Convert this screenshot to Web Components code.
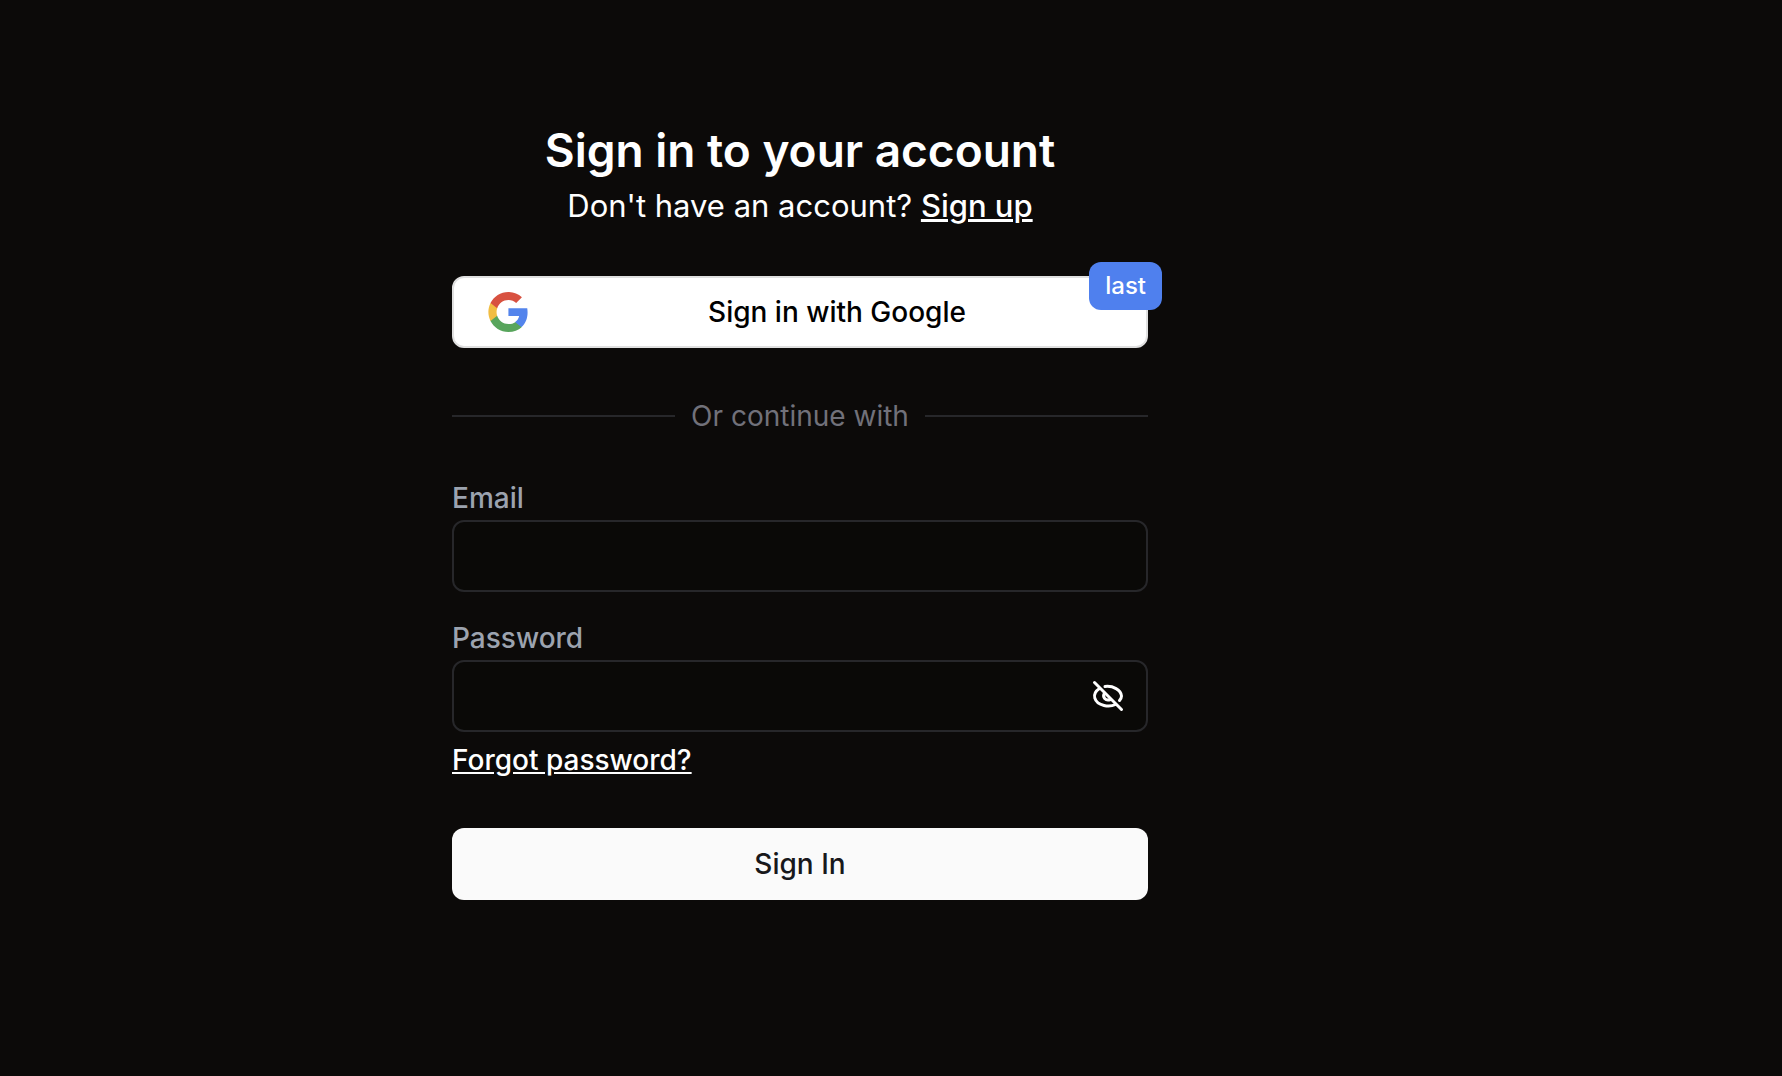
<!DOCTYPE html>
<html lang="en">
<head>
<meta charset="utf-8">
<meta name="viewport" content="width=device-width, initial-scale=1">
<title>Sign in</title>
<style>
  body {
    margin: 0;
    min-height: 100vh;
    background: #0c0a09;
    color: #fff;
    font: 400 28px/40px Inter, "Liberation Sans", sans-serif;
  }
</style>
</head>
<body>
<sign-in-page></sign-in-page>

<script>
const define = (name, html, setup) => {
  customElements.define(name, class extends HTMLElement {
    connectedCallback() {
      if (this.shadowRoot) return;
      const root = this.attachShadow({ mode: "open" });
      root.innerHTML = html;
      if (setup) setup(this, root);
    }
  });
};

define("google-logo", `
  <style>:host { display: block; width: 40px; height: 40px; } svg { display: block; width: 100%; height: 100%; }</style>
  <svg viewBox="0 0 48 48" aria-hidden="true">
    <path fill="#5384ec" d="M47.500 24.500c0-1.600-.2-3.200-.4-4.900H24.500v9.300h12.900c-.6 3-2.300 5.500-4.800 7.200v6h7.700c4.500-4.200 7.200-10.300 7.200-17.600z"/>
    <path fill="#58a55c" d="M24.500 48c6.500 0 11.900-2.100 15.900-5.800l-7.700-6c-2.100 1.400-4.900 2.300-8.200 2.300-6.300 0-11.600-4.200-13.500-9.900H3v6.200C7 42.700 15.100 48 24.500 48z"/>
    <path fill="#f1bd42" d="M11 28.600c-1-3-1-6.200 0-9.200v-6.200H3c-3.400 6.800-3.400 14.800 0 21.600z"/>
    <path fill="#d85140" d="M24.500 9.500c3.400-.1 6.800 1.200 9.300 3.600l6.900-6.900C36.300 2.100 30.500-.1 24.500 0 15.100 0 7 5.300 3 13.200l8 6.200c1.900-5.700 7.200-9.900 13.500-9.900z"/>
  </svg>`);

define("eye-off-icon", `
  <style>:host { display: block; width: 36px; height: 36px; } svg { display: block; width: 100%; height: 100%; }</style>
  <svg viewBox="0 0 36 36" fill="none" stroke="#fff" stroke-width="3" stroke-linecap="round" aria-hidden="true">
    <path d="M4.500 4.500 31.500 31.500"/>
    <path d="M15 8.500C23 7.500 31 12 31.500 18c0 1.500-.8 3-2 4.500"/>
    <path d="M9.500 10.500C1 16 4 25 14 27.500c4 1 8 .7 11.500-1"/>
    <path d="M14.500 15c-2.500 4 1 8.500 6 6.500"/>
  </svg>`);

define("page-heading", `
  <style>
    :host { display: block; text-align: center; }
    h1 { margin: 0; font-size: 46px; line-height: 48px; font-weight: 600; }
    p { margin: 8px 0 0; font-size: 31px; line-height: 48px; }
    ::slotted(a) { color: inherit; font-weight: 500; }
  </style>
  <h1><slot name="title"></slot></h1>
  <p><slot></slot></p>`);

define("provider-button", `
  <style>
    :host { display: block; position: relative; }
    button {
      box-sizing: border-box; width: 100%; height: 72px; padding: 0 0 0 34px;
      display: flex; align-items: center;
      border: 2px solid #e0e0e0; border-radius: 12px; background: #fff; color: #000;
      font: inherit; font-weight: 500; cursor: pointer;
    }
    .label { flex: 1; text-align: center; }
    .badge {
      position: absolute; top: -14px; right: -14px; padding: 8px 16px;
      border-radius: 12px; background: #4f80ee; color: #fff;
      font-size: 24px; line-height: 32px; font-weight: 500;
    }
  </style>
  <button type="button"><slot name="icon"></slot><span class="label"><slot></slot></span></button>
  <span class="badge"><slot name="badge"></slot></span>`);

define("text-divider", `
  <style>
    :host { display: flex; align-items: center; gap: 16px; color: #71717a; }
    :host::before, :host::after { content: ""; flex: 1; height: 2px; background: #27272a; }
  </style>
  <slot></slot>`);

define("form-field", `
  <style>
    :host { display: block; }
    label { display: block; color: #9ca3af; font-weight: 500; margin-bottom: 2px; }
    .box {
      box-sizing: border-box; height: 72px; display: flex; align-items: center;
      border: 2px solid #27272a; border-radius: 12px; background: #0a0907;
    }
    .box:focus-within { border-color: #71717a; }
    input {
      flex: 1; min-width: 0; height: 100%; box-sizing: border-box; padding: 0 24px;
      border: 0; outline: 0; background: none; color: inherit; font: inherit;
    }
    ::slotted(button) { margin: 0 20px 0 0; padding: 0; border: 0; background: none; cursor: pointer; }
  </style>
  <label for="field"></label>
  <div class="box"><input id="field"><slot></slot></div>`,
  (host, root) => {
    root.querySelector("label").textContent = host.getAttribute("label");
    root.querySelector("input").type = host.getAttribute("type");
  });

define("submit-button", `
  <style>
    :host { display: block; }
    button {
      display: block; width: 100%; height: 72px; padding: 0; border: 0; border-radius: 12px;
      background: #fafafa; color: #18181b; font: inherit; font-weight: 500; cursor: pointer;
    }
  </style>
  <button type="submit"><slot></slot></button>`);

define("sign-in-page", `
  <style>
    :host { display: block; padding: 126px 182px 0 0; }
    main { max-width: 696px; margin: 0 auto; display: flex; flex-direction: column; }
    provider-button { margin-top: 46px; }
    text-divider { margin: 48px 0 42px; }
    form { display: flex; flex-direction: column; }
    form-field + form-field { margin-top: 26px; }
    .forgot { align-self: flex-start; margin: 8px 0 48px; color: inherit; font-weight: 500; }
  </style>
  <main>
    <page-heading><span slot="title">Sign in to your account</span>Don't have an account? <a href="#signup">Sign up</a></page-heading>
    <provider-button><google-logo slot="icon"></google-logo>Sign in with Google<span slot="badge">last</span></provider-button>
    <text-divider>Or continue with</text-divider>
    <form>
      <form-field label="Email" type="email"></form-field>
      <form-field label="Password" type="password"><button type="button" aria-label="Show password"><eye-off-icon></eye-off-icon></button></form-field>
      <a class="forgot" href="#forgot">Forgot password?</a>
      <submit-button>Sign In</submit-button>
    </form>
  </main>`);
</script>
</body>
</html>
